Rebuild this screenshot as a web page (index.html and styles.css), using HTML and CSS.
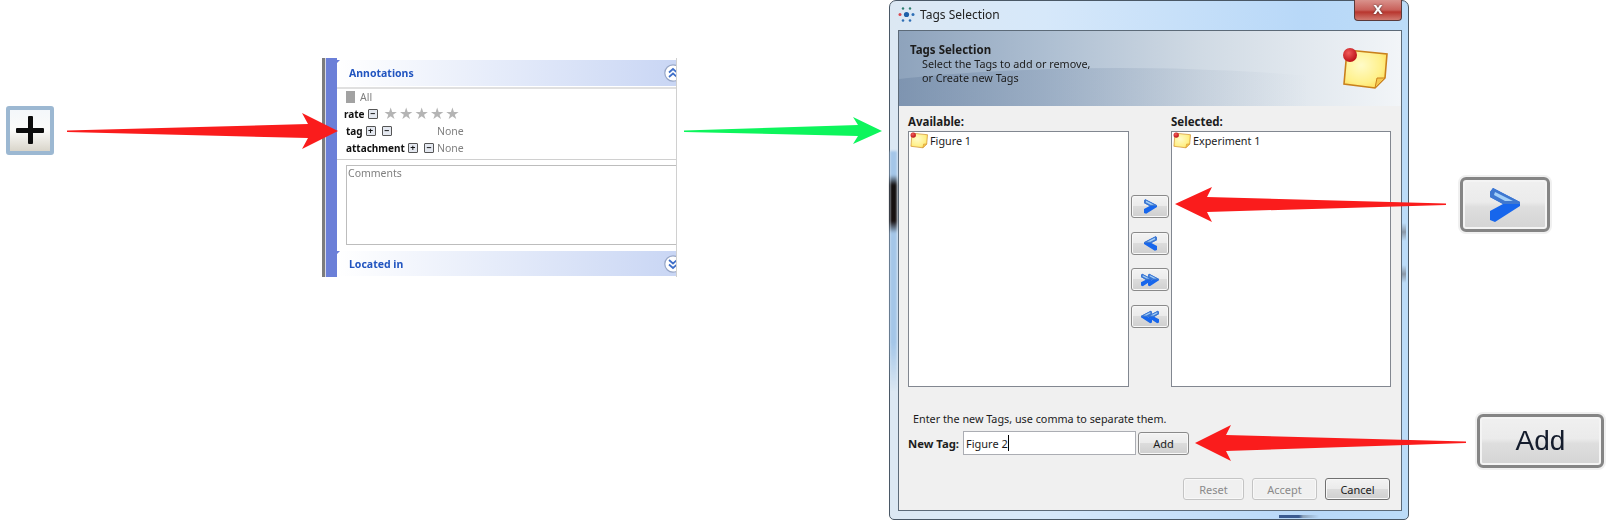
FILE: index.html
```html
<!DOCTYPE html>
<html lang="en">
  <head>
    <meta charset="UTF-8" />
    <title>Adding a tag</title>
    <link rel="stylesheet" href="styles.css">
  </head>
  <body>
    <svg width="0" height="0" class="defs">
      <defs>
        <radialGradient id="noteFill" cx="0.4" cy="0.4" r="0.8">
          <stop offset="0" stop-color="#fffbc8" />
          <stop offset="0.6" stop-color="#fff08a" />
          <stop offset="1" stop-color="#ffd23c" />
        </radialGradient>
        <radialGradient id="pinFill" cx="0.4" cy="0.35" r="0.7">
          <stop offset="0" stop-color="#f05a5a" />
          <stop offset="1" stop-color="#b80c12" />
        </radialGradient>
        <symbol id="note" viewBox="0 0 46 44">
          <path d="M5 3 L45 7 L43 31 L33 41 L2 37 Z" fill="url(#noteFill)" stroke="#c9801c" stroke-width="1.6" />
          <path d="M33 41 L35 31 L43 31 Z" fill="#f6c850" stroke="#c9801c" stroke-width="1" />
          <circle cx="8" cy="8" r="7" fill="url(#pinFill)" />
        </symbol>
        <symbol id="chevron" viewBox="0 0 30 34">
          <path d="M3 0 L30 14 L30 18 L5 34 L0 32 L0 23 L13 16 L0 9 L0 4 Z" fill="#1766ec" />
          <path d="M3 0 L30 14 L30 16 L13 16 L0 9 L0 4 Z" fill="#3f78d0" />
          <path d="M5 4 L23 13 L15 13 L4 7 Z" fill="#a4d0f8" />
        </symbol>
        <symbol id="roundUp" viewBox="0 0 18 18">
          <circle cx="9" cy="9" r="8.2" fill="#fff" stroke="#97a6c6" stroke-width="1.2" />
          <path d="M5 8.5 L9 5 L13 8.5 M5 13 L9 9.5 L13 13" fill="none" stroke="#3f6fc8" stroke-width="1.7" />
        </symbol>
        <symbol id="roundDown" viewBox="0 0 18 18">
          <circle cx="9" cy="9" r="8.2" fill="#fff" stroke="#97a6c6" stroke-width="1.2" />
          <path d="M5 5 L9 8.5 L13 5 M5 9.5 L9 13 L13 9.5" fill="none" stroke="#3f6fc8" stroke-width="1.7" />
        </symbol>
      </defs>
    </svg>

    <div class="canvas">
      <!-- enlarged plus -->
      <div class="plus-big"><span class="plus-bar-h"></span><span class="plus-bar-v"></span></div>

      <!-- annotations panel -->
      <div class="panel">
        <div class="panel-rail"></div>
        <div class="panel-main">
          <div class="panel-head">
            <span>Annotations</span>
            <svg class="round-toggle" width="18" height="18"><use href="#roundUp" /></svg>
          </div>
          <div class="panel-rows">
            <div class="row row-all"><span class="all-box"></span><span class="muted">All</span></div>
            <div class="row row-rate">
              <b>rate</b><span class="mini">&minus;</span>
              <span class="stars">&#9733;&#9733;&#9733;&#9733;&#9733;</span>
            </div>
            <div class="row">
              <div class="row-left"><b>tag</b><span class="mini">+</span><span class="mini mini-gap">&minus;</span></div>
              <span class="muted">None</span>
            </div>
            <div class="row">
              <div class="row-left"><b>attachment</b><span class="mini">+</span><span class="mini mini-gap">&minus;</span></div>
              <span class="muted">None</span>
            </div>
          </div>
          <div class="comments-wrap">
            <div class="comments">Comments</div>
          </div>
          <div class="panel-head panel-foot">
            <span>Located in</span>
            <svg class="round-toggle" width="18" height="18"><use href="#roundDown" /></svg>
          </div>
        </div>
      </div>

      <!-- tags dialog -->
      <div class="dialog">
        <div class="smudge"></div>
        <div class="smudge-right"></div>
        <div class="smudge-bottom"></div>
        <div class="titlebar">
          <svg class="app-icon" width="17" height="17" viewBox="0 0 17 17">
            <circle cx="8.5" cy="8.5" r="2.6" fill="#1d5fa8" />
            <circle cx="2" cy="8.5" r="1.5" fill="#d9484f" />
            <circle cx="15" cy="8.5" r="1.5" fill="#2f6fb5" />
            <circle cx="5" cy="2.5" r="1.2" fill="#2e7f70" />
            <circle cx="12" cy="2.5" r="1.2" fill="#2e7f70" />
            <circle cx="5" cy="14.5" r="1.3" fill="#2f6fb5" />
            <circle cx="12" cy="14.5" r="1.3" fill="#2f6fb5" />
          </svg>
          <span>Tags Selection</span>
          <div class="close-btn">x</div>
        </div>
        <div class="content">
          <div class="banner">
            <div class="banner-wave"></div>
            <div class="banner-text">
              <b>Tags Selection</b>
              <p>Select the Tags to add or remove,<br />or Create new Tags</p>
            </div>
            <svg class="banner-note" width="46" height="44"><use href="#note" /></svg>
          </div>

          <div class="body">
            <div class="pickers">
              <div class="picker">
                <b>Available:</b>
                <div class="listbox">
                  <div class="item"><svg width="18" height="17"><use href="#note" /></svg>Figure 1</div>
                </div>
              </div>
              <div class="moves">
                <div class="btn move"><svg width="13" height="15"><use href="#chevron" /></svg></div>
                <div class="btn move"><svg class="flip" width="13" height="15"><use href="#chevron" /></svg></div>
                <div class="btn move">
                  <svg class="dbl" width="11" height="16"><use href="#chevron" /></svg><svg class="dbl" width="11" height="16"><use href="#chevron" /></svg>
                </div>
                <div class="btn move">
                  <svg class="dbl flip" width="11" height="16"><use href="#chevron" /></svg><svg class="dbl flip" width="11" height="16"><use href="#chevron" /></svg>
                </div>
              </div>
              <div class="picker">
                <b>Selected:</b>
                <div class="listbox">
                  <div class="item"><svg width="18" height="17"><use href="#note" /></svg>Experiment 1</div>
                </div>
              </div>
            </div>

            <div class="hint">Enter the new Tags, use comma to separate them.</div>
            <div class="new-tag">
              <b>New Tag:</b>
              <div class="text-input">Figure 2<span class="caret"></span></div>
              <div class="btn add">Add</div>
            </div>
            <div class="actions">
              <div class="btn action off">Reset</div>
              <div class="btn action action-wide off">Accept</div>
              <div class="btn action action-wide">Cancel</div>
            </div>
          </div>
        </div>
      </div>

      <!-- enlarged buttons -->
      <div class="big-chevron"><svg width="30" height="34"><use href="#chevron" /></svg></div>
      <div class="big-add">Add</div>

      <!-- arrows over everything -->
      <svg class="arrows" width="1606" height="521">
        <polygon fill="#fa1c1c" points="67,130.5 308,124 302,113 338,131 302,149 308,138 67,132" />
        <polygon fill="#0df55c" points="684,130.5 858,125 853,117 882,131 853,144 858,136 684,132" />
        <polygon fill="#fa1c1c" points="1446,203.5 1207,197 1212,187 1175,204 1212,222 1207,212 1446,205" />
        <polygon fill="#fa1c1c" points="1466,441.5 1226,435 1231,425 1195,443 1231,461 1226,451 1466,443" />
      </svg>
    </div>
  </body>
</html>
```

FILE: styles.css
```css
* {
  box-sizing: border-box;
}
body {
  margin: 0;
  background: #fff;
  font-family: "Noto Sans", "Liberation Sans", sans-serif;
  font-size: 11px;
  color: #1c1c1c;
  overflow: hidden;
}
.defs {
  display: block;
  height: 0;
}
.canvas {
  position: relative;
  width: 1606px;
  height: 521px;
  overflow: hidden;
}
.arrows {
  position: absolute;
  left: 0;
  top: 0;
}

/* enlarged plus */
.plus-big {
  position: absolute;
  left: 6px;
  top: 106px;
  width: 48px;
  height: 49px;
  border: 4px solid #9cb8d2;
  border-radius: 3px;
  background: linear-gradient(#f4f7fa, #fbfbf9 50%, #d9d5ca);
  filter: blur(0.6px);
}
.plus-bar-h,
.plus-bar-v {
  position: absolute;
  background: #0c0c0c;
  border-radius: 1px;
}
.plus-bar-h {
  left: 6px;
  top: 18px;
  width: 28px;
  height: 5px;
}
.plus-bar-v {
  left: 18px;
  top: 6px;
  width: 5px;
  height: 28px;
}

/* annotations panel */
.panel {
  position: absolute;
  left: 322px;
  top: 58px;
  width: 355px;
  height: 219px;
  display: flex;
  filter: blur(0.35px);
}
.panel-rail {
  width: 15px;
  flex: none;
  border-left: 3px solid #7c7c7c;
  box-shadow: inset 1px 0 0 #d8d8e4;
  background: #6b7fd8;
}
.panel-main {
  flex: 1;
  min-width: 0;
  padding-top: 2px;
  border-right: 1px solid #d0d0d0;
  display: flex;
  flex-direction: column;
}
.panel-head {
  position: relative;
  height: 26px;
  padding-left: 12px;
  display: flex;
  align-items: center;
  justify-content: space-between;
  background: linear-gradient(90deg, #fff, #c9d6f4);
  color: #2255c0;
  font-weight: 700;
  font-size: 10.5px;
  overflow: hidden;
  flex: none;
}
.panel-head::before {
  content: "";
  position: absolute;
  left: 0;
  top: 0;
  border-top: 3px solid #6b7fd8;
  border-right: 3px solid transparent;
}
.round-toggle {
  margin-right: -6px;
  flex: none;
}
.panel-rows {
  margin-top: 1px;
  border-top: 2px solid #e0e0e0;
  border-bottom: 1px solid #d0d0d0;
  padding: 0 0 3px 9px;
  height: 73px;
  flex: none;
}
.row {
  height: 17px;
  display: flex;
  align-items: center;
  color: #111;
}
.row b {
  font-size: 10px;
}
.row-all {
  height: 16px;
}
.row-rate {
  margin-left: -2px;
}
.row-left {
  width: 91px;
  flex: none;
  display: flex;
  align-items: center;
}
.muted {
  color: #808080;
  font-size: 10.5px;
}
.all-box {
  width: 9px;
  height: 12px;
  margin-right: 5px;
  background: #a2a2a2;
}
.mini {
  width: 10px;
  height: 10px;
  margin-left: 3px;
  border: 1px solid #555;
  border-radius: 1px;
  background: #e4e8f0;
  font-size: 9px;
  font-weight: 700;
  line-height: 7px;
  display: flex;
  justify-content: center;
}
.mini-gap {
  margin-left: 6px;
}
.stars {
  margin-left: 6px;
  color: #b4b4b4;
  font-family: "DejaVu Sans", sans-serif;
  font-size: 16px;
  letter-spacing: 1.1px;
  line-height: 15px;
}
.comments-wrap {
  padding: 5px 0 0 9px;
  height: 91px;
  flex: none;
}
.comments {
  height: 80px;
  border: 1px solid #bdbdbd;
  border-right: none;
  color: #808080;
  font-size: 10.5px;
  padding-left: 1px;
  line-height: 14px;
}
.panel-foot {
  height: 25px;
}

/* dialog */
.dialog {
  position: absolute;
  left: 889px;
  top: 0;
  width: 520px;
  height: 520px;
  padding: 0 6px 8px 8px;
  border: 1px solid #4a5866;
  border-radius: 7px 7px 5px 5px;
  background: linear-gradient(90deg, #dce8f3, #d6e8fa 30%, #b8d8f8 80%, #bcdcf8);
  display: flex;
  flex-direction: column;
  filter: blur(0.35px);
}
.smudge {
  position: absolute;
  left: 0;
  top: 150px;
  width: 7px;
  height: 240px;
  background: linear-gradient(#a4c6e8, #a4c6e8 24px, #141010 34px, #181010 70px, #a4c6e8 82px, #a4c6e8 80%, transparent);
  filter: blur(1px);
}
.smudge-right {
  position: absolute;
  right: 2px;
  top: 222px;
  width: 4px;
  height: 60px;
  background: linear-gradient(transparent, #8a98a8 15%, transparent 30%, transparent 70%, #8a98a8 85%, transparent);
}
.smudge-bottom {
  position: absolute;
  left: 389px;
  bottom: 1px;
  width: 40px;
  height: 3px;
  background: linear-gradient(90deg, #3a5a90 50%, #8aa0b8 60%, transparent);
  filter: blur(0.5px);
}
.titlebar {
  position: relative;
  height: 29px;
  padding-bottom: 2px;
  flex: none;
  display: flex;
  align-items: center;
  gap: 5px;
  font-size: 12px;
  color: #222;
}
.close-btn {
  position: absolute;
  right: 0;
  top: -1px;
  width: 48px;
  height: 21px;
  border: 1px solid #5a3a3a;
  border-top: none;
  border-radius: 0 0 4px 4px;
  background: linear-gradient(#d9928c, #c8605a 50%, #b8362e 60%, #d07a70);
  color: #fff;
  font-family: "Liberation Sans", sans-serif;
  font-weight: 700;
  font-size: 17px;
  line-height: 18px;
  text-align: center;
  text-shadow: 0 0 2px #333;
}
.content {
  flex: 1;
  min-height: 0;
  border: 1px solid #5c6a78;
  background: #f0f0f0;
  display: flex;
  flex-direction: column;
}
.banner {
  position: relative;
  height: 75px;
  flex: none;
  display: flex;
  justify-content: space-between;
  padding: 12px 13px 0 11px;
  background: linear-gradient(90deg, #8ea3bc, #aebfd2 30%, #d0dae4 60%, #f2f5f8);
  overflow: hidden;
}
.banner-wave {
  position: absolute;
  left: -160px;
  top: 37px;
  width: 760px;
  height: 120px;
  border-radius: 50%;
  background: linear-gradient(90deg, rgba(90, 115, 150, 0.4), rgba(90, 115, 150, 0.22) 40%, transparent 75%);
}
.banner-text {
  position: relative;
}
.banner-text b {
  font-size: 11.5px;
  line-height: 14px;
  display: block;
}
.banner-text p {
  margin: 0 0 0 12px;
  font-size: 10.8px;
  line-height: 14px;
}
.banner-note {
  position: relative;
  margin-top: 4px;
}
.body {
  flex: 1;
  min-height: 0;
  padding: 7px 0 0 9px;
  display: flex;
  flex-direction: column;
}
.pickers {
  display: flex;
  height: 274px;
  flex: none;
}
.picker {
  width: 221px;
  display: flex;
  flex-direction: column;
}
.picker:last-child {
  width: 220px;
}
.picker b {
  height: 18px;
  line-height: 18px;
  font-size: 11.5px;
}
.listbox {
  flex: 1;
  background: #fff;
  border: 1px solid #828790;
}
.item {
  display: flex;
  align-items: center;
  gap: 2px;
  font-size: 10.8px;
  height: 17px;
  margin-left: 1px;
}
.moves {
  width: 42px;
  padding: 82px 2px 0 2px;
  display: flex;
  flex-direction: column;
  gap: 13.7px;
}
.btn {
  border: 1px solid #8a8a8a;
  border-radius: 3px;
  background: linear-gradient(#f3f3f3, #ebebeb 48%, #dcdcdc 50%, #cfcfcf);
  box-shadow: inset 0 0 0 1px #f8f8f8;
  display: flex;
  align-items: center;
  justify-content: center;
}
.move {
  height: 23px;
  width: 38px;
  flex: none;
}
.flip {
  transform: scaleX(-1);
}
.dbl {
  margin: 0 -2px;
}
.hint {
  margin: 24px 0 0 5px;
  height: 15px;
  line-height: 15px;
  font-size: 10.8px;
}
.new-tag {
  margin-top: 5px;
  display: flex;
  align-items: center;
  gap: 2px;
}
.new-tag b {
  width: 53px;
  font-size: 11.3px;
  white-space: nowrap;
}
.text-input {
  width: 173px;
  height: 24px;
  border: 1px solid #abadb3;
  background: #fff;
  padding-left: 2px;
  display: flex;
  align-items: center;
}
.caret {
  width: 1px;
  height: 16px;
  background: #000;
}
.add {
  width: 51px;
  height: 23px;
  font-size: 11px;
}
.actions {
  margin-top: 23px;
  padding-right: 11px;
  display: flex;
  justify-content: flex-end;
  gap: 8px;
}
.action {
  width: 61px;
  height: 22px;
  font-size: 11px;
  border-color: #707070;
}
.action-wide {
  width: 65px;
}
.off {
  border-color: #c4c4c4;
  background: #f0f0f0;
  color: #8a8a8a;
}

/* enlarged buttons */
.big-chevron,
.big-add {
  position: absolute;
  display: flex;
  align-items: center;
  justify-content: center;
  border: 3px solid #858585;
  border-radius: 6px;
  background: linear-gradient(#f0f0f0, #ebebeb 45%, #dedede 55%, #d4d4d4);
  box-shadow: inset 0 0 0 2px #f4f4f4, 0 0 0 2px #f0f0f0;
  filter: blur(0.6px);
}
.big-chevron {
  left: 1460px;
  top: 177px;
  width: 90px;
  height: 55px;
}
.big-add {
  left: 1477px;
  top: 414px;
  width: 127px;
  height: 54px;
  font-family: "Liberation Sans", sans-serif;
  font-size: 28px;
  color: #141c2c;
}
```
